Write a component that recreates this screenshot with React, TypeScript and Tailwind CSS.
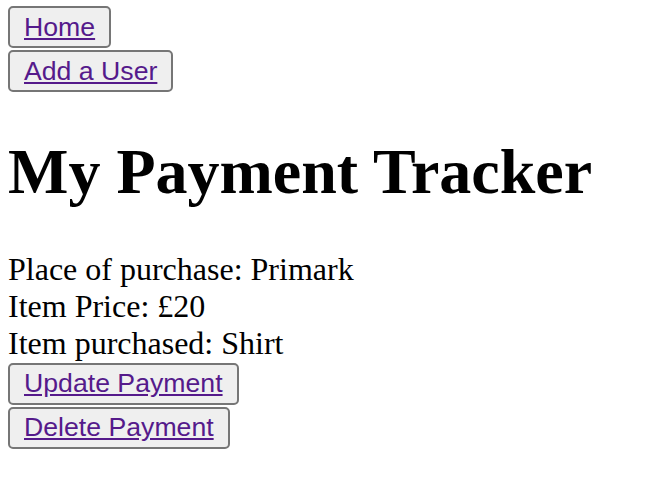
import React from "react";

function Btn({ label }: { label: string }) {
  return (
    <button className="flex h-[42px] w-fit items-center rounded-[5px] border-2 border-[#767676] bg-[#efefef] px-[14px]">
      <a href="#" className="text-[26.67px] leading-none text-[#551a8b] underline" style={{ fontFamily: '"Liberation Sans", Arial, sans-serif' }}>
        {label}
      </a>
    </button>
  );
}

export default function App() {
  return (
    <div className="min-h-[492px] bg-white pl-[8px] pt-[6px] text-black" style={{ fontFamily: '"Liberation Serif", "Times New Roman", serif' }}>
      <div className="flex flex-col gap-[2px]">
        <Btn label="Home" />
        <Btn label="Add a User" />
      </div>
      <h1 className="my-[42.9px] text-[64px] font-bold leading-[1.15]">My Payment Tracker</h1>
      <div className="text-[32px] leading-[1.15]">
        <div>Place of purchase: Primark</div>
        <div>Item Price: £20</div>
        <div>Item purchased: Shirt</div>
      </div>
      <div className="mt-[1px] flex flex-col gap-[2px]">
        <Btn label="Update Payment" />
        <Btn label="Delete Payment" />
      </div>
    </div>
  );
}
